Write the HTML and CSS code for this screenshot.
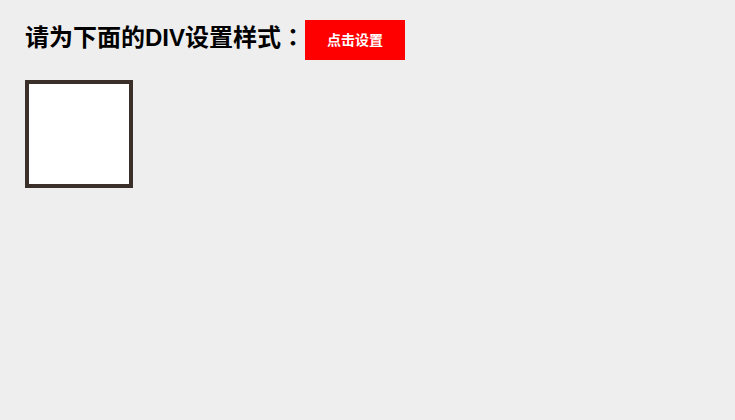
FILE: index.html
```html
<!DOCTYPE html>
<html lang="zh-CN">
<head>
  <meta charset="UTF-8" />
  <meta name="viewport" content="width=device-width, initial-scale=1.0"/>
  <title>设置样式</title>
  <link rel="stylesheet" href="styles.css">
</head>
<body>
  <header class="toolbar">
    <h1>请为下面的DIV设置样式<span class="colon" lang="zh-TW">：</span></h1>
    <button type="button" class="set-btn">点击设置</button>
  </header>

  <main>
    <div class="box"></div>
  </main>
</body>
</html>
```
FILE: styles.css
```css
body {
  font-family: "Liberation Sans", "Noto Sans CJK SC", sans-serif;
  background: #eee;
  margin: 0;
  padding: 20px 25px;
  color: #000;
}

.toolbar {
  display: flex;
  align-items: flex-start;
}

h1 {
  margin: 0;
  font-size: 24px;
  line-height: 32px;
  font-weight: bold;
}

/* full-width colon centred in its cell */
.colon {
  font-family: "Noto Sans CJK TC", sans-serif;
}

.set-btn {
  width: 100px;
  height: 40px;
  padding: 0 0 2px;
  border: none;
  background: #f00;
  color: #fff;
  font-family: inherit;
  font-size: 14px;
  font-weight: bold;
  cursor: pointer;
}

.box {
  width: 100px;
  height: 100px;
  margin-top: 20px;
  border: 4px solid #3a2f29;
  background: #fff;
}
```
